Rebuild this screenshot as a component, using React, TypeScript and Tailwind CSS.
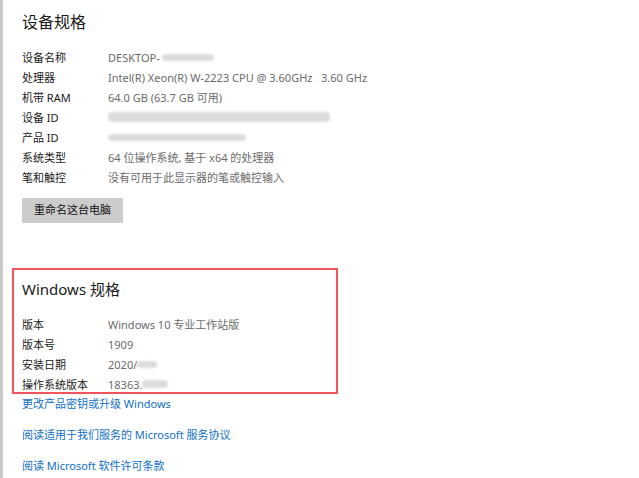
import React from "react";

const F = { fontFamily: '"Noto Sans", "Noto Sans CJK SC", sans-serif' };

function Blur({ w, h = 8, ml = 0 }: { w: number; h?: number; ml?: number }) {
  return (
    <span
      className="inline-block bg-[#dcdcdc] blur-[1px] rounded-sm align-middle"
      style={{ width: w, height: h, marginLeft: ml }}
    />
  );
}

function Row({ label, children }: { label: string; children: React.ReactNode }) {
  return (
    <div className="flex items-center h-[20px] text-[11px] leading-none">
      <div className="w-[86px] text-[#1a1a1a]">{label}</div>
      <div className="text-[#6b6b6b] flex items-center whitespace-pre">{children}</div>
    </div>
  );
}

export default function App() {
  return (
    <div
      className="w-[639px] h-[478px] bg-white overflow-hidden border-l-[3px] border-[#cacaca]"
      style={F}
    >
      <div className="pl-[19px] pt-[10px]">
        <div className="text-[16px] leading-[24px] text-[#1a1a1a] h-[24px]">设备规格</div>
        <div className="mt-[13px] flex flex-col">
          <Row label="设备名称">
            DESKTOP-<Blur w={52} h={7} ml={2} />
          </Row>
          <Row label="处理器">Intel(R) Xeon(R) W-2223 CPU @ 3.60GHz   3.60 GHz</Row>
          <Row label="机带 RAM">64.0 GB (63.7 GB 可用)</Row>
          <Row label="设备 ID">
            <Blur w={222} h={10} />
          </Row>
          <Row label="产品 ID">
            <Blur w={138} h={7} />
          </Row>
          <Row label="系统类型">64 位操作系统, 基于 x64 的处理器</Row>
          <Row label="笔和触控">没有可用于此显示器的笔或触控输入</Row>
        </div>
        <div className="mt-[11px] w-[101px] h-[25px] bg-[#cccccc] flex items-center justify-center text-[11px] text-[#111]">
          重命名这台电脑
        </div>
      </div>
      <div className="ml-[9px] mt-[45px] w-[326px] h-[126px] border-2 border-[#f2555d] pl-[8px] pt-[8px]">
        <div className="text-[15px] leading-[22px] h-[22px] text-[#1a1a1a]">Windows 规格</div>
        <div className="mt-[14px] flex flex-col">
          <Row label="版本">Windows 10 专业工作站版</Row>
          <Row label="版本号">1909</Row>
          <Row label="安装日期">
            2020/<Blur w={20} h={7} />
          </Row>
          <Row label="操作系统版本">
            18363.<Blur w={26} h={8} />
          </Row>
        </div>
      </div>
      <div className="pl-[19px] flex flex-col text-[11px] text-[#0f6fc6] leading-none">
        <div className="h-[18px] flex items-center">更改产品密钥或升级 Windows</div>
        <div className="mt-[13px] h-[18px] flex items-center">阅读适用于我们服务的 Microsoft 服务协议</div>
        <div className="mt-[13px] h-[18px] flex items-center">阅读 Microsoft 软件许可条款</div>
      </div>
    </div>
  );
}
